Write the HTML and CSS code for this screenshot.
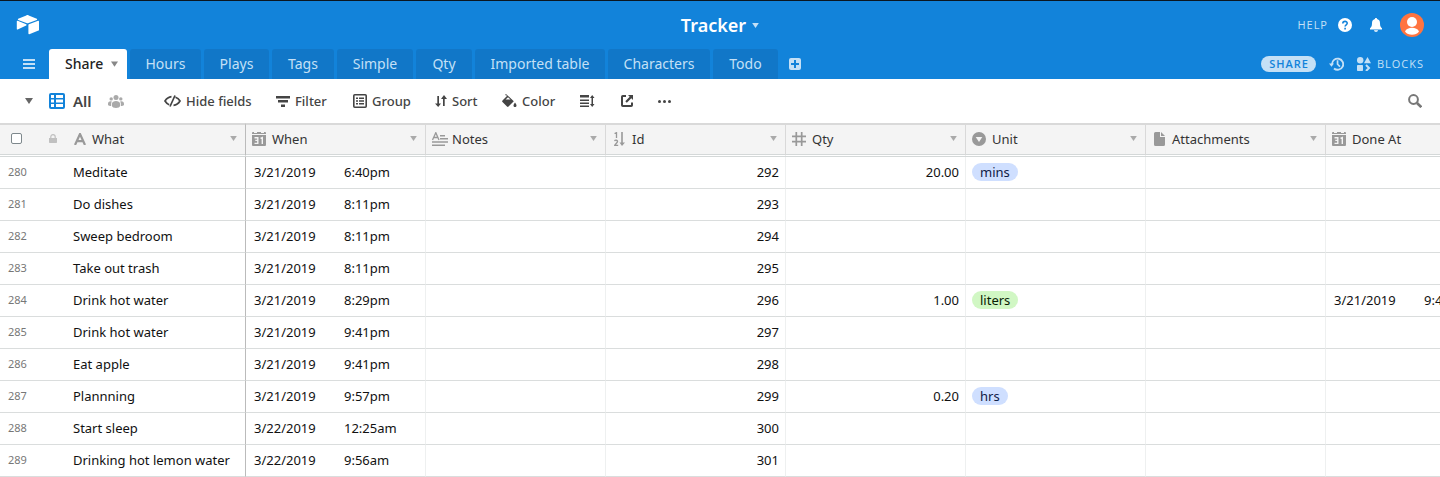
FILE: index.html
```
<!DOCTYPE html>
<html lang="en">
<head>
<meta charset="utf-8">
<title>Tracker</title>
<link rel="stylesheet" href="styles.css">
</head>
<body>
<svg class="defs" aria-hidden="true">
  <symbol id="caret" viewBox="0 0 8 6"><path d="M0 0h8L4 6z"/></symbol>
  <symbol id="calendar" viewBox="0 0 14 14"><path d="M0 1a1 1 0 0 1 1-1h1v1h3V0h4v1h3V0h1a1 1 0 0 1 1 1v1H0zM0 3h14v10a1 1 0 0 1-1 1H1a1 1 0 0 1-1-1z"/><path d="M2.500 5.700h3.300v2.700H3.300h2.500v3H2.500M8.500 6.300l1.800-.8v6.500" fill="none" stroke="#f4f4f4" stroke-width="1.400"/></symbol>
</svg>

<header class="top">
  <div class="bar">
    <a class="logo" href="#" aria-label="Home">
      <svg width="24" height="20" viewBox="0 0 24 20"><path d="M10.300.4 2.200 3.800c-.5.200-.5.900 0 1.100l8.200 3.200c.8.300 1.500.3 2.200 0l8.200-3.200c.5-.2.500-.9 0-1.100L12.700.4c-.8-.4-1.600-.4-2.400 0z"/><path d="M12.400 9.900v8.700c0 .5.500.8.900.6l9.200-3.600c.3-.1.500-.3.500-.6V6.400c0-.5-.5-.8-.9-.6l-9.200 3.500c-.3.100-.5.300-.5.600zM10.200 10.400l-2.700 1.300-5.800 2.800c-.4.200-.9-.1-.9-.5V6.300c0-.3.300-.7.900-.6l8.500 3.500c.5.200.5.900 0 1.200z"/></svg>
    </a>
    <button class="title" type="button">Tracker <svg width="7" height="5"><use href="#caret"/></svg></button>
    <div class="account">
      <button class="help" type="button">HELP
        <svg width="14" height="14" viewBox="0 0 14 14"><circle cx="7" cy="7" r="7" fill="#fff"/><path d="M4.800 5.500C4.800 2.600 9.300 2.700 9.200 5.300 9.200 6.800 7.100 6.900 7.100 8.600M7.100 9.700v1.700" fill="none" stroke="#1283da" stroke-width="1.600"/></svg>
      </button>
      <button class="bell" type="button" aria-label="Notifications"><svg width="12" height="14" viewBox="0 0 12 14"><path d="M6 0c.8 0 1.100.5 1.100 1.100C9.300 1.700 10 3.300 10 5.200c0 3 .8 4.200 2 5.100v1.200H0v-1.200c1.200-.9 2-2.100 2-5.100 0-1.900.7-3.500 2.900-4.100C4.900.5 5.200 0 6 0zM4 12.300h4C7.700 14.300 4.300 14.300 4 12.300z"/></svg></button>
      <button type="button" aria-label="Account"><svg width="24" height="24" viewBox="0 0 24 24"><circle cx="12" cy="12" r="12" fill="#ff7440"/><circle cx="12" cy="9" r="5" fill="#fff"/><path d="M5 18.500c2-5 12-5 14 0-3 4.300-11 4.300-14 0z" fill="#fff"/></svg></button>
    </div>
  </div>
  <div class="bar tabs-bar">
    <button class="menu" type="button" aria-label="Menu"><svg width="12" height="10" viewBox="0 0 12 10"><path d="M0 0h12v2H0zM0 4h12v2H0zM0 8h12v2H0z"/></svg></button>
    <nav class="tabs">
      <a class="tab active" href="#">Share <svg width="7" height="6"><use href="#caret"/></svg></a>
      <a class="tab" href="#">Hours</a>
      <a class="tab" href="#">Plays</a>
      <a class="tab" href="#">Tags</a>
      <a class="tab" href="#">Simple</a>
      <a class="tab" href="#">Qty</a>
      <a class="tab" href="#">Imported table</a>
      <a class="tab" href="#">Characters</a>
      <a class="tab" href="#">Todo</a>
    </nav>
    <button class="add" type="button" aria-label="Add table"><svg width="12" height="12" viewBox="0 0 12 12"><rect width="12" height="12" rx="2"/><path d="M6 2v8M2 6h8" stroke="#1283da" stroke-width="2"/></svg></button>
    <div class="actions">
      <button class="share" type="button">SHARE</button>
      <button type="button" aria-label="History"><svg width="15" height="14" viewBox="0 0 15 14"><path d="M3 7.300A5.600 5.600 0 1 1 5 11.500" fill="none" stroke="#c4e0f6" stroke-width="1.900"/><path d="M0 6.500h5L2.500 9.800zM7.700 3.300h1.700v3.600l2.200 2.200-1.200 1.200-2.700-2.700z"/></svg></button>
      <button class="blocks" type="button"><svg width="14" height="14" viewBox="0 0 14 14"><circle cx="3.200" cy="3.200" r="3.200"/><path d="M10.500 0 14 6.200H7z"/><rect y="8" width="6" height="6" rx=".7"/><path d="m9 8 3 3-3 3" fill="none" stroke="#c4e0f6" stroke-width="2"/></svg>BLOCKS</button>
    </div>
  </div>
</header>

<div class="toolbar">
  <button class="views" type="button" aria-label="Views"><svg width="8" height="6"><use href="#caret"/></svg></button>
  <button class="view" type="button">
    <svg width="16" height="16" viewBox="0 0 16 16"><rect width="16" height="16" rx="2" fill="#1283da"/><path d="M2 2h3v3H2zM7 2h7v3H7zM2 6.500h3v3H2zM7 6.500h7v3H7zM2 11h3v3H2zM7 11h7v3H7z" fill="#fff"/></svg>
    All
    <svg class="people" width="16" height="13" viewBox="0 0 16 13"><circle cx="8" cy="2.500" r="2.500"/><circle cx="3.200" cy="3.900" r="1.700"/><circle cx="12.800" cy="3.900" r="1.700"/><path d="M4 11V8.500C4 5.100 12 5.100 12 8.500V11c0 2.600-8 2.600-8 0zM3.300 6.400C1 6.200 0 7.200 0 8.800v1c.5 1 1.800 1.300 3.200 1.300V8.500c0-.9.500-1.500 1-1.900zM12.700 6.400c2.300-.2 3.300.8 3.300 2.400v1c-.5 1-1.800 1.300-3.200 1.300V8.500c0-.9-.5-1.500-1-1.900z"/></svg>
  </button>
  <div class="tools">
    <button type="button"><svg width="17" height="12" viewBox="0 0 17 12"><path d="M7.500 1.700C4.500 2 2.300 4 1 6c.8 1.300 2.200 2.900 4.200 3.700M11.500 2.200C13.800 3 15.300 4.800 16 6c-1.200 2-3.300 4-6.500 4.300M11 .5 6 11.500" fill="none" stroke="#444" stroke-width="1.700"/></svg>Hide fields</button>
    <button type="button"><svg width="14" height="11" viewBox="0 0 14 11"><path d="M0 0h14v2.500H0zM2 4h10v2.500H2zM5 8.500h4V11H5z"/></svg>Filter</button>
    <button type="button"><svg width="14" height="14" viewBox="0 0 14 14"><rect x=".8" y=".8" width="12.400" height="12.400" rx="1" fill="none" stroke="#444" stroke-width="1.600"/><path d="M3 3.500h2V5H3zM6 3.500h5V5H6zM3 6.300h2v1.500H3zM6 6.300h5v1.500H6zM3 9.100h2v1.500H3zM6 9.100h5v1.500H6z"/></svg>Group</button>
    <button type="button"><svg width="12" height="12" viewBox="0 0 12 12"><path d="M2.300 1h1.700v7.500h2L3.200 12 0 8.500h2.300zM8 11V4H6l3-4 3 4H9.700v7z"/></svg>Sort</button>
    <button type="button"><svg width="15" height="14" viewBox="0 0 15 14"><path d="m4 0 7.800 7.200L6.500 12.500c-.5.500-1 .5-1.500 0L.5 8c-.5-.5-.5-1 0-1.500l4.700-4.700L3 1zM13 8.500c1 1.500 1.500 2.300 1.500 3.200 0 1.800-3 1.800-3 0 0-.9.500-1.700 1.500-3.200z"/><path d="m3.600 5.600 2.400-2.300L8.600 5.600z" fill="#fff"/></svg>Color</button>
    <button type="button" aria-label="Row height"><svg width="15" height="12" viewBox="0 0 15 12"><path d="M0 0h9v2.500H0zM0 4.500h9V6H0zM0 7.500h9V9H0zM0 10.500h9V12H0zM12.200 0 14.500 3H13v6h1.500l-2.300 3L10 9h1.500V3H10z"/></svg></button>
    <button type="button" aria-label="Share view"><svg width="12" height="12" viewBox="0 0 12 12"><path d="M5 1H1.800Q1 1 1 1.800v8.400q0 .8.800.8h8.400q.8 0 .8-.8V7.500" fill="none" stroke="#444" stroke-width="2"/><path d="M7 0h5v5l-1.700-1.700L5.800 7.700 4.300 6.200l4.400-4.500z"/></svg></button>
    <button type="button" aria-label="More"><svg width="13" height="3" viewBox="0 0 13 3"><circle cx="1.500" cy="1.500" r="1.500"/><circle cx="6.500" cy="1.500" r="1.500"/><circle cx="11.500" cy="1.500" r="1.500"/></svg></button>
  </div>
  <button class="search" type="button" aria-label="Search"><svg width="14" height="14" viewBox="0 0 14 14"><circle cx="5.500" cy="5.500" r="4.400" fill="none" stroke="#777" stroke-width="2"/><path d="m9 9 4.300 4.200" stroke="#777" stroke-width="2.600"/></svg></button>
</div>

<main class="grid-wrap">
<table class="grid">
  <colgroup><col class="c-num"><col class="c-name"><col><col><col><col><col><col><col></colgroup>
  <thead>
    <tr>
      <th><div class="head first"><input type="checkbox" aria-label="Select all"><svg class="lock" width="8" height="9" viewBox="0 0 8 9"><path d="M0 4h8v4.200q0 .8-.8.800H.8Q0 9 0 8.200z"/><path d="M1.800 4V2.800c0-2.800 4.400-2.800 4.400 0V4" fill="none" stroke="#c0c0c0" stroke-width="1.200"/></svg></div></th>
      <th class="name"><div class="head"><span class="icon"><svg width="12" height="12" viewBox="0 0 12 12"><path d="M1 12 6 1l5 11M3 8.200h6" fill="none" stroke="#999" stroke-width="2.200"/></svg></span>What<svg class="caret" width="7" height="5"><use href="#caret"/></svg></div></th>
      <th><div class="head"><span class="icon"><svg width="14" height="14"><use href="#calendar"/></svg></span>When<svg class="caret" width="7" height="5"><use href="#caret"/></svg></div></th>
      <th><div class="head"><span class="icon"><svg width="16" height="14" viewBox="0 0 16 14"><path d="M.500 8 3.800.7 7 8M1.800 5.500h4" fill="none" stroke="#999" stroke-width="1.300"/><path d="M8 3h5v1.500H8zM8 6h8v1.500H8zM0 9.300h16v1.500H0zM0 12.500h13V14H0z"/></svg></span>Notes<svg class="caret" width="7" height="5"><use href="#caret"/></svg></div></th>
      <th><div class="head"><span class="icon inset"><svg width="11" height="14" viewBox="0 0 11 14"><path d="M.5 1.500 2.500.7V6M.6 9.200C1 7.700 3.800 8 3.500 9.700 3.300 11 1.500 11.800.8 13.300h3.400" fill="none" stroke="#999" stroke-width="1.300"/><path d="M7.200 0h1.600v10.500H11L8 14l-2.500-3.500h1.700z"/></svg></span>Id<svg class="caret" width="7" height="5"><use href="#caret"/></svg></div></th>
      <th><div class="head"><span class="icon"><svg width="14" height="14" viewBox="0 0 14 14"><path d="M4.300 0v14M9.700 0v14M0 4.300h14M0 9.700h14" stroke="#999" stroke-width="1.700"/></svg></span>Qty<svg class="caret" width="7" height="5"><use href="#caret"/></svg></div></th>
      <th><div class="head"><span class="icon"><svg width="14" height="14" viewBox="0 0 14 14"><circle cx="7" cy="7" r="7"/><path d="M3.700 5h6.600L7 10z" fill="#f4f4f4"/></svg></span>Unit<svg class="caret" width="7" height="5"><use href="#caret"/></svg></div></th>
      <th><div class="head"><span class="icon inset"><svg width="11" height="14" viewBox="0 0 11 14"><path d="M1.500 0H6v5h5v7.500q0 1.500-1.500 1.500h-8Q0 14 0 12.500v-11Q0 0 1.500 0zM7 0l4 4H7z"/></svg></span>Attachments<svg class="caret" width="7" height="5"><use href="#caret"/></svg></div></th>
      <th><div class="head"><span class="icon"><svg width="14" height="14"><use href="#calendar"/></svg></span>Done At<svg class="caret" width="7" height="5"><use href="#caret"/></svg></div></th>
    </tr>
  </thead>
  <tbody>
    <tr><td class="num">280</td><td class="name">Meditate</td><td><div class="date"><span>3/21/2019</span><span>6:40pm</span></div></td><td></td><td class="right">292</td><td class="right">20.00</td><td class="select"><span class="pill blue">mins</span></td><td></td><td></td></tr>
    <tr><td class="num">281</td><td class="name">Do dishes</td><td><div class="date"><span>3/21/2019</span><span>8:11pm</span></div></td><td></td><td class="right">293</td><td></td><td></td><td></td><td></td></tr>
    <tr><td class="num">282</td><td class="name">Sweep bedroom</td><td><div class="date"><span>3/21/2019</span><span>8:11pm</span></div></td><td></td><td class="right">294</td><td></td><td></td><td></td><td></td></tr>
    <tr><td class="num">283</td><td class="name">Take out trash</td><td><div class="date"><span>3/21/2019</span><span>8:11pm</span></div></td><td></td><td class="right">295</td><td></td><td></td><td></td><td></td></tr>
    <tr><td class="num">284</td><td class="name">Drink hot water</td><td><div class="date"><span>3/21/2019</span><span>8:29pm</span></div></td><td></td><td class="right">296</td><td class="right">1.00</td><td class="select"><span class="pill green">liters</span></td><td></td><td><div class="date"><span>3/21/2019</span><span>9:41pm</span></div></td></tr>
    <tr><td class="num">285</td><td class="name">Drink hot water</td><td><div class="date"><span>3/21/2019</span><span>9:41pm</span></div></td><td></td><td class="right">297</td><td></td><td></td><td></td><td></td></tr>
    <tr><td class="num">286</td><td class="name">Eat apple</td><td><div class="date"><span>3/21/2019</span><span>9:41pm</span></div></td><td></td><td class="right">298</td><td></td><td></td><td></td><td></td></tr>
    <tr><td class="num">287</td><td class="name">Plannning</td><td><div class="date"><span>3/21/2019</span><span>9:57pm</span></div></td><td></td><td class="right">299</td><td class="right">0.20</td><td class="select"><span class="pill blue">hrs</span></td><td></td><td></td></tr>
    <tr><td class="num">288</td><td class="name">Start sleep</td><td><div class="date"><span>3/22/2019</span><span>12:25am</span></div></td><td></td><td class="right">300</td><td></td><td></td><td></td><td></td></tr>
    <tr><td class="num">289</td><td class="name">Drinking hot lemon water</td><td><div class="date"><span>3/22/2019</span><span>9:56am</span></div></td><td></td><td class="right">301</td><td></td><td></td><td></td><td></td></tr>
  </tbody>
</table>
</main>
</body>
</html>
```
FILE: styles.css
```
* { box-sizing: border-box; }

body {
  margin: 0;
  background: #fff;
  color: #111;
  font: 13px/20px "Noto Sans", sans-serif;
}

button {
  display: flex;
  align-items: center;
  padding: 0;
  border: 0;
  background: none;
  color: inherit;
  font: inherit;
  cursor: pointer;
}

a { color: inherit; text-decoration: none; }
svg { flex: none; fill: currentColor; }
.defs { position: absolute; width: 0; height: 0; }

/* Header */
.top {
  border-top: 1px solid #0b1620;
  background: #1283da;
  color: #c4e0f6;
}

.bar {
  display: grid;
  grid-template-columns: 1fr auto 1fr;
  align-items: center;
  height: 48px;
  padding: 0 16px;
}

.logo { display: flex; color: #fff; }

.title {
  gap: 6px;
  color: #fff;
  font-size: 18px;
  font-weight: 600;
}
.title svg { color: #c4e0f6; }

.account {
  display: flex;
  align-items: center;
  justify-content: flex-end;
  gap: 18px;
}
.bell { color: #fff; }

.help, .share, .blocks {
  font-family: "Open Sans", sans-serif;
  font-size: 11px;
  letter-spacing: 1px;
}
.help { gap: 10px; }

.tabs-bar {
  display: flex;
  align-items: stretch;
  height: 30px;
}

.menu { width: 33px; padding-left: 7px; }

.tabs {
  display: grid;
  grid-template-columns: 78px 71px 65px 62px 76px 56px 130px 102px 65px;
  gap: 3px;
}

.tab {
  display: flex;
  align-items: center;
  justify-content: center;
  border-radius: 3px 3px 0 0;
  background: #1177c8;
  font-size: 14px;
  white-space: nowrap;
}

.tab.active {
  justify-content: space-between;
  padding: 0 9px 0 16px;
  background: #fff;
  color: #222;
  font-weight: 500;
}
.tab.active svg { color: #888; }

.add { margin-left: 11px; }

.actions {
  display: flex;
  align-items: center;
  gap: 13px;
  margin-left: auto;
}

.share {
  height: 16px;
  padding: 0 7px 0 8px;
  border-radius: 8px;
  background: #c4e0f6;
  color: #1283da;
  font-weight: 600;
}
.blocks { gap: 6px; }

/* View toolbar */
.toolbar {
  display: flex;
  align-items: center;
  height: 44px;
  padding: 0 18px 0 25px;
  color: #444;
  font-weight: 500;
}

.views { width: 24px; color: #666; }

.view {
  gap: 8px;
  width: 115px;
  font-size: 15px;
  font-weight: 600;
}
.view .people { margin-left: 8px; color: #aaa; }

.tools {
  display: grid;
  grid-template-columns: 112px 77px 82px 67px 78px 41px 37px 14px;
  align-items: center;
}
.tools button { gap: 5px; white-space: nowrap; }

.search { margin-left: auto; }

/* Records */
.grid-wrap { overflow: hidden; }

.grid {
  width: 1506px;
  table-layout: fixed;
  border-collapse: separate;
  border-spacing: 0;
}

.c-num { width: 65px; }
.c-name { width: 181px; }

th {
  height: 34px;
  padding: 0;
  border-top: 2px solid #d9d9d9;
  border-bottom: 3px double #d4d8d8;
  border-right: 1px solid #d9d9d9;
  background: #f4f4f4;
  background-clip: padding-box;
  color: #333;
  font-weight: 400;
}

th:first-child, td.num { border-right: 0; }
th.name, td.name { border-right: 1px solid #bbb; }

.head {
  display: flex;
  align-items: center;
  height: 29px;
  padding: 0 8px 2px 6px;
}

.head .icon {
  display: flex;
  width: 20px;
  color: #999;
}
.head .inset { padding-left: 2px; }

.name .head { padding-left: 9px; }
.name .icon { width: 18px; }
.head .caret { margin-left: auto; color: #aaa; }

.head.first {
  justify-content: space-between;
  padding: 0 8px 2px 11px;
}
.lock { color: #c0c0c0; }

.first input {
  appearance: none;
  width: 11px;
  height: 11px;
  margin: 0;
  border: 1px solid #7e888c;
  border-radius: 2px;
  background: #fff;
}

td {
  height: 32px;
  padding: 0 8px 2px;
  border-right: 1px solid #eef0f0;
  border-bottom: 1px solid #dadddd;
  white-space: nowrap;
}

td.num { color: #777; font-size: 11px; }
td.right { padding-right: 6px; text-align: right; }
td.select { padding-left: 6px; }

.date {
  display: grid;
  grid-template-columns: 62px auto;
  justify-content: start;
  gap: 28px;
}

.pill {
  display: inline-block;
  padding: 0 8px;
  border-radius: 9px;
  line-height: 18px;
}
.blue { background: #cfdfff; color: #102046; }
.green { background: #d1f7c4; color: #0b1d05; }
```
